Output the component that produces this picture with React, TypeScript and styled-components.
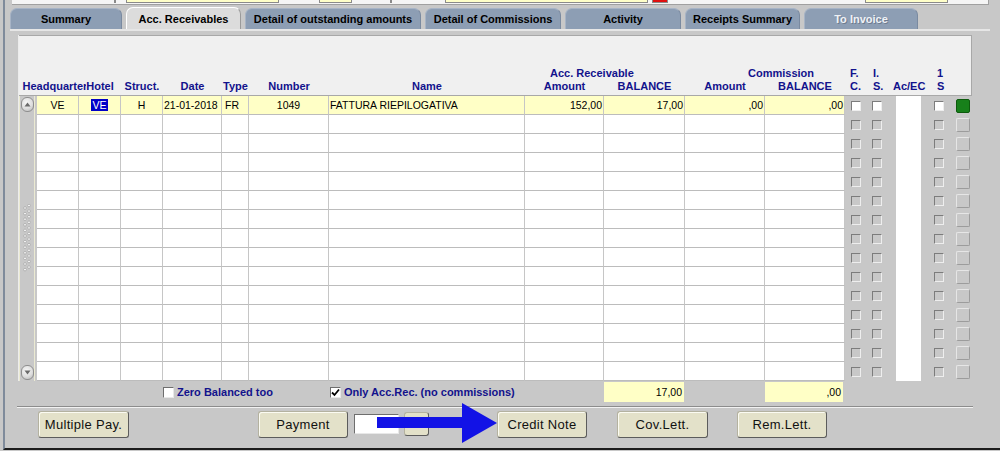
import React from "react";
import styled, { createGlobalStyle } from "styled-components";

const Global = createGlobalStyle`
  html, body { margin: 0; padding: 0; background: #c8c8c8; overflow: hidden; }
  body { font-family: "Liberation Sans", Arial, sans-serif; }
  #root { width: 1000px; height: 451px; }
`;

const COLS = "42px 42px 42px 59px 27px 80px 196px 79px 81px 80px 80px";

const Frame = styled.div`
  position: relative;
  box-sizing: border-box;
  width: 997px;
  height: 450px;
  margin-left: 3px;
  border-left: 2px solid #7f8b9b;
  border-bottom: 2px solid #1c1c1c;
  display: flex;
  flex-direction: column;
`;

const TopStrip = styled.div`
  display: flex;
  align-items: flex-start;
  margin-left: 7px;
  width: 977px;
  height: 5px;
  box-sizing: border-box;
  background: #f5f5f5;
  border-bottom: 1px solid #a0a0a0;
  border-right: 1px solid #a0a0a0;
`;

const TopField = styled.div<{ $ml: number; $w: number; $c: string }>`
  margin-left: ${(p) => p.$ml}px;
  width: ${(p) => p.$w}px;
  height: 3px;
  box-sizing: border-box;
  background: ${(p) => p.$c};
  border: 1px solid #8a8a8a;
  border-top: none;
`;

const TabBar = styled.div`
  display: flex;
  gap: 4px;
  align-items: flex-end;
  margin: 2px 0 0 5px;
  height: 22px;
`;

const Tab = styled.div<{ $w: number; $active?: boolean; $disabled?: boolean }>`
  width: ${(p) => p.$w}px;
  height: ${(p) => (p.$active ? 22 : 21)}px;
  box-sizing: border-box;
  border-radius: 7px 7px 0 0;
  background: ${(p) => (p.$active ? "#dcdcdc" : "#8d9eb4")};
  border-top: 1px solid ${(p) => (p.$active ? "#ffffff" : "#a7b4c6")};
  border-left: 1px solid ${(p) => (p.$active ? "#ffffff" : "#a7b4c6")};
  border-right: 1px solid ${(p) => (p.$active ? "#9a9a9a" : "#7a8aa0")};
  display: flex;
  align-items: center;
  justify-content: center;
  font-size: 11px;
  font-weight: bold;
  white-space: nowrap;
  color: ${(p) => (p.$disabled ? "#eef1f6" : "#000")};
  text-shadow: ${(p) => (p.$disabled ? "1px 1px 0 #6d7b8f" : "none")};
`;

const TabLine = styled.div`
  margin-left: 5px;
  width: 980px;
  height: 2px;
  background: #e6e6e6;
`;

const Panel = styled.div`
  margin: 4px 0 0 13px;
  width: 954px;
  box-sizing: border-box;
  border-left: 1px solid #ececec;
`;

const Header = styled.div`
  display: flex;
  align-items: flex-end;
  height: 61px;
  box-sizing: border-box;
  background: #f0f0f0;
  border-top: 1px solid #a8a8a8;
  border-bottom: 1px solid #a8a8a8;
  border-right: 1px solid #a8a8a8;
  padding-bottom: 2px;
`;

const Spacer = styled.div<{ $w: number }>`
  width: ${(p) => p.$w}px;
  flex: none;
`;

const HeadGrid = styled.div`
  display: grid;
  grid-template-columns: ${COLS};
  grid-template-rows: 13px 13px;
  width: 808px;
`;

const SideHead = styled.div`
  display: grid;
  grid-template-columns: 5px 23px 20px 44px 34px;
  grid-template-rows: 13px 13px;
`;

const HeadLabel = styled.span<{ $col: string; $row: number; $justify?: string; $ml?: number }>`
  grid-column: ${(p) => p.$col};
  grid-row: ${(p) => p.$row};
  justify-self: ${(p) => p.$justify ?? "center"};
  margin-left: ${(p) => p.$ml ?? 0}px;
  background: #f0f0f0;
  color: #12128c;
  font-size: 11px;
  font-weight: bold;
  line-height: 13px;
  white-space: nowrap;
`;

const Body = styled.div`
  display: flex;
  background: #c8c8c8;
  height: 285px;
`;

const ScrollTrack = styled.div`
  width: 16px;
  margin-right: 2px;
  box-sizing: border-box;
  border-left: 1px solid #ebead2;
  border-right: 1px solid #ebead2;
  background: #c8c8c8;
  display: flex;
  flex-direction: column;
  align-items: center;
  justify-content: space-between;
  padding: 1px 0 1px;
`;

const ScrollBtn = styled.div`
  width: 13px;
  height: 15px;
  box-sizing: border-box;
  border-radius: 6px;
  border: 1px solid #8e8e8e;
  background: radial-gradient(circle at 40% 35%, #f6f6f6 0%, #dedede 55%, #b4b4b4 100%);
  display: flex;
  align-items: center;
  justify-content: center;
`;

const Rows = styled.div`
  display: flex;
  flex-direction: column;
`;

const Row = styled.div`
  display: flex;
  height: 19px;
`;

const DataRow = styled.div`
  display: grid;
  grid-template-columns: ${COLS};
  width: 808px;
`;

const Cell = styled.div<{ $align: string; $pad: number; $yellow?: boolean }>`
  box-sizing: border-box;
  height: 19px;
  border-right: 1px solid #c6c6c6;
  border-bottom: 1px solid #bcbcbc;
  background: ${(p) => (p.$yellow ? "#ffffc6" : "#ffffff")};
  display: flex;
  align-items: center;
  justify-content: ${(p) => p.$align};
  padding: 0 ${(p) => p.$pad}px;
  font-size: 10.5px;
  color: #000;
  white-space: nowrap;
  overflow: hidden;
`;

const Highlight = styled.span`
  background: #0000c8;
  color: #fff;
  padding: 0 1px;
`;

const SideRow = styled.div`
  display: flex;
  align-items: center;
  width: 126px;
  height: 19px;
`;

const SideCheck = styled.div<{ $ml: number; $on?: boolean }>`
  margin-left: ${(p) => p.$ml}px;
  width: 10px;
  height: 10px;
  box-sizing: border-box;
  background: ${(p) => (p.$on ? "#ffffff" : "#c8c8c8")};
  border: 1px solid;
  border-color: #7c7c7c #eeeeee #eeeeee #7c7c7c;
`;

const WhiteCol = styled.div<{ $ml: number }>`
  margin-left: ${(p) => p.$ml}px;
  width: 25px;
  height: 19px;
  background: #fff;
`;

const SideBtn = styled.div<{ $ml: number; $green?: boolean }>`
  margin-left: ${(p) => p.$ml}px;
  width: 14px;
  height: 14px;
  box-sizing: border-box;
  border-radius: 2px;
  background: ${(p) => (p.$green ? "#17801a" : "#c8c8c8")};
  border: 1px solid;
  border-color: ${(p) => (p.$green ? "#0c5a0c" : "#e6e6e6 #9c9c9c #9c9c9c #e6e6e6")};
`;

const TotalsRow = styled.div`
  display: grid;
  grid-template-columns: ${COLS};
  width: 808px;
  padding-left: 32px;
  margin-top: 1px;
  height: 20px;
`;

const CheckLabel = styled.div<{ $col: string; $ml: number }>`
  grid-column: ${(p) => p.$col};
  margin-left: ${(p) => p.$ml}px;
  display: flex;
  align-items: center;
  gap: 3px;
  white-space: nowrap;
  font-size: 11px;
  font-weight: bold;
  color: #12128c;
`;

const Box = styled.div`
  width: 11px;
  height: 11px;
  box-sizing: border-box;
  background: #fff;
  border: 1px solid;
  border-color: #6e6e6e #e8e8e8 #e8e8e8 #6e6e6e;
  display: flex;
  align-items: center;
  justify-content: center;
`;

const TotalField = styled.div<{ $col: number; $w: number }>`
  grid-column: ${(p) => p.$col};
  width: ${(p) => p.$w}px;
  height: 20px;
  box-sizing: border-box;
  background: #ffffc6;
  display: flex;
  align-items: center;
  justify-content: flex-end;
  padding-right: 2px;
  font-size: 10.5px;
  color: #000;
`;

const Separator = styled.div`
  margin: 4px 0 0 12px;
  width: 956px;
  border-top: 1px solid #8c8c8c;
  border-bottom: 1px solid #f2f2f2;
`;

const ButtonRow = styled.div`
  display: flex;
  align-items: center;
  height: 28px;
  margin-top: 2px;
  padding-left: 33px;
`;

const Button = styled.div<{ $ml: number; $w: number }>`
  margin-left: ${(p) => p.$ml}px;
  width: ${(p) => p.$w}px;
  height: 27px;
  box-sizing: border-box;
  border-radius: 3px;
  background: #e3e1c9;
  border: 1px solid;
  border-color: #b4b2a0 #5c5c5c #5c5c5c #b4b2a0;
  box-shadow: inset 1px 1px 0 #fbfbf2;
  display: flex;
  align-items: center;
  justify-content: center;
  font-size: 13px;
  letter-spacing: 0.3px;
  color: #111;
  white-space: nowrap;
`;

const SmallButton = styled.div<{ $ml: number }>`
  margin-left: ${(p) => p.$ml}px;
  width: 25px;
  height: 24px;
  box-sizing: border-box;
  border-radius: 3px;
  background: #e3e1c9;
  border: 1px solid;
  border-color: #b4b2a0 #5c5c5c #5c5c5c #b4b2a0;
`;

const Input = styled.div<{ $ml: number }>`
  margin-left: ${(p) => p.$ml}px;
  width: 45px;
  height: 20px;
  box-sizing: border-box;
  background: #fff;
  border: 1px solid;
  border-color: #6e6e6e #e8e8e8 #e8e8e8 #6e6e6e;
`;

const Arrow = styled.svg`
  position: absolute;
  left: 372px;
  top: 403px;
`;

const topFields = [
  { s: 102, e: 104, c: "#222" },
  { s: 114, e: 267, c: "#ffffc8" },
  { s: 307, e: 340, c: "#ffffc8" },
  { s: 378, e: 380, c: "#222" },
  { s: 433, e: 636, c: "#ffffc8" },
  { s: 640, e: 656, c: "#e01010" },
  { s: 853, e: 936, c: "#ffffc8" },
];

const tabs = [
  { label: "Summary", w: 112 },
  { label: "Acc. Receivables", w: 115, active: true },
  { label: "Detail of outstanding amounts", w: 176 },
  { label: "Detail of Commissions", w: 136 },
  { label: "Activity", w: 116 },
  { label: "Receipts Summary", w: 115 },
  { label: "To Invoice", w: 114, disabled: true },
];

type Col = { align: string; pad: number };
const colDefs: Col[] = [
  { align: "center", pad: 0 },
  { align: "center", pad: 0 },
  { align: "center", pad: 0 },
  { align: "flex-start", pad: 1 },
  { align: "flex-start", pad: 3 },
  { align: "center", pad: 0 },
  { align: "flex-start", pad: 1 },
  { align: "flex-end", pad: 1 },
  { align: "flex-end", pad: 1 },
  { align: "flex-end", pad: 1 },
  { align: "flex-end", pad: 1 },
];

const firstRow = ["VE", "VE", "H", "21-01-2018", "FR", "1049", "FATTURA RIEPILOGATIVA", "152,00", "17,00", ",00", ",00"];

function Grip() {
  const dots = [];
  for (let i = 0; i < 12; i++) {
    dots.push(<circle key={"a" + i} cx={2} cy={4 + i * 5.6} r={1.3} fill="#fafafa" stroke="#8a8a8a" strokeWidth={0.5} />);
    dots.push(<circle key={"b" + i} cx={6} cy={1.5 + i * 5.6} r={1.3} fill="#fafafa" stroke="#8a8a8a" strokeWidth={0.5} />);
  }
  return (
    <svg width="9" height="70" viewBox="0 0 9 70">
      {dots}
    </svg>
  );
}

function Tri({ up }: { up: boolean }) {
  return (
    <svg width="7" height="5" viewBox="0 0 7 5">
      <polygon points={up ? "0.5,4.5 3.5,0.5 6.5,4.5" : "0.5,0.5 3.5,4.5 6.5,0.5"} fill="#6a6a6a" />
    </svg>
  );
}

export default function App() {
  let prev = 0;
  const rows = Array.from({ length: 15 }, (_, i) => i);
  return (
    <>
      <Global />
      <Frame>
        <TopStrip>
          {topFields.map((f, i) => {
            const ml = f.s - prev;
            prev = f.e;
            return <TopField key={i} $ml={ml} $w={f.e - f.s} $c={f.c} />;
          })}
        </TopStrip>
        <TabBar>
          {tabs.map((t) => (
            <Tab key={t.label} $w={t.w} $active={t.active} $disabled={t.disabled}>
              {t.label}
            </Tab>
          ))}
        </TabBar>
        <TabLine />
        <Panel>
          <Header>
            <Spacer $w={18} />
            <HeadGrid>
              <HeadLabel $col="1" $row={2}>Headquarters</HeadLabel>
              <HeadLabel $col="2" $row={2}>Hotel</HeadLabel>
              <HeadLabel $col="3" $row={2}>Struct.</HeadLabel>
              <HeadLabel $col="4" $row={2}>Date</HeadLabel>
              <HeadLabel $col="5" $row={2}>Type</HeadLabel>
              <HeadLabel $col="6" $row={2}>Number</HeadLabel>
              <HeadLabel $col="7" $row={2}>Name</HeadLabel>
              <HeadLabel $col="8 / span 2" $row={1} $justify="start" $ml={25}>Acc. Receivable</HeadLabel>
              <HeadLabel $col="8" $row={2}>Amount</HeadLabel>
              <HeadLabel $col="9" $row={2}>BALANCE</HeadLabel>
              <HeadLabel $col="10 / span 2" $row={1} $justify="start" $ml={63}>Commission</HeadLabel>
              <HeadLabel $col="10" $row={2}>Amount</HeadLabel>
              <HeadLabel $col="11" $row={2}>BALANCE</HeadLabel>
            </HeadGrid>
            <SideHead>
              <HeadLabel $col="2" $row={1} $justify="start">F.</HeadLabel>
              <HeadLabel $col="2" $row={2} $justify="start">C.</HeadLabel>
              <HeadLabel $col="3" $row={1} $justify="start">I.</HeadLabel>
              <HeadLabel $col="3" $row={2} $justify="start">S.</HeadLabel>
              <HeadLabel $col="4" $row={2} $justify="start">Ac/EC</HeadLabel>
              <HeadLabel $col="5" $row={1} $justify="start">1</HeadLabel>
              <HeadLabel $col="5" $row={2} $justify="start">S</HeadLabel>
            </SideHead>
          </Header>
          <Body>
            <ScrollTrack>
              <ScrollBtn>
                <Tri up />
              </ScrollBtn>
              <Grip />
              <ScrollBtn>
                <Tri up={false} />
              </ScrollBtn>
            </ScrollTrack>
            <Rows>
              {rows.map((r) => (
                <Row key={r}>
                  <DataRow>
                    {colDefs.map((c, ci) => (
                      <Cell key={ci} $align={c.align} $pad={c.pad} $yellow={r === 0}>
                        {r === 0 ? ci === 1 ? <Highlight>{firstRow[ci]}</Highlight> : firstRow[ci] : null}
                      </Cell>
                    ))}
                  </DataRow>
                  <SideRow>
                    <SideCheck $ml={6} $on={r === 0} />
                    <SideCheck $ml={11} $on={r === 0} />
                    <WhiteCol $ml={14} />
                    <SideCheck $ml={13} $on={r === 0} />
                    <SideBtn $ml={12} $green={r === 0} />
                  </SideRow>
                </Row>
              ))}
            </Rows>
          </Body>
        </Panel>
        <TotalsRow>
          <CheckLabel $col="4 / span 3" $ml={0}>
            <Box />
            Zero Balanced too
          </CheckLabel>
          <CheckLabel $col="7" $ml={1}>
            <Box>
              <svg width="9" height="9" viewBox="0 0 9 9">
                <path d="M1 4.5 L3.5 7 L8 1.5" fill="none" stroke="#000" strokeWidth="1.8" />
              </svg>
            </Box>
            Only Acc.Rec. (no commissions)
          </CheckLabel>
          <TotalField $col={9} $w={80}>17,00</TotalField>
          <TotalField $col={11} $w={78}>,00</TotalField>
        </TotalsRow>
        <Separator />
        <ButtonRow>
          <Button $ml={0} $w={91}>Multiple Pay.</Button>
          <Button $ml={129} $w={90}>Payment</Button>
          <Input $ml={6} />
          <SmallButton $ml={5} />
          <Button $ml={68} $w={90}>Credit Note</Button>
          <Button $ml={30} $w={91}>Cov.Lett.</Button>
          <Button $ml={29} $w={90}>Rem.Lett.</Button>
        </ButtonRow>
        <Arrow width="121" height="41" viewBox="0 0 121 41">
          <rect x="0" y="14" width="87" height="11" fill="#1212e6" />
          <polygon points="85,0 120,20 85,40" fill="#1212e6" />
        </Arrow>
      </Frame>
    </>
  );
}
